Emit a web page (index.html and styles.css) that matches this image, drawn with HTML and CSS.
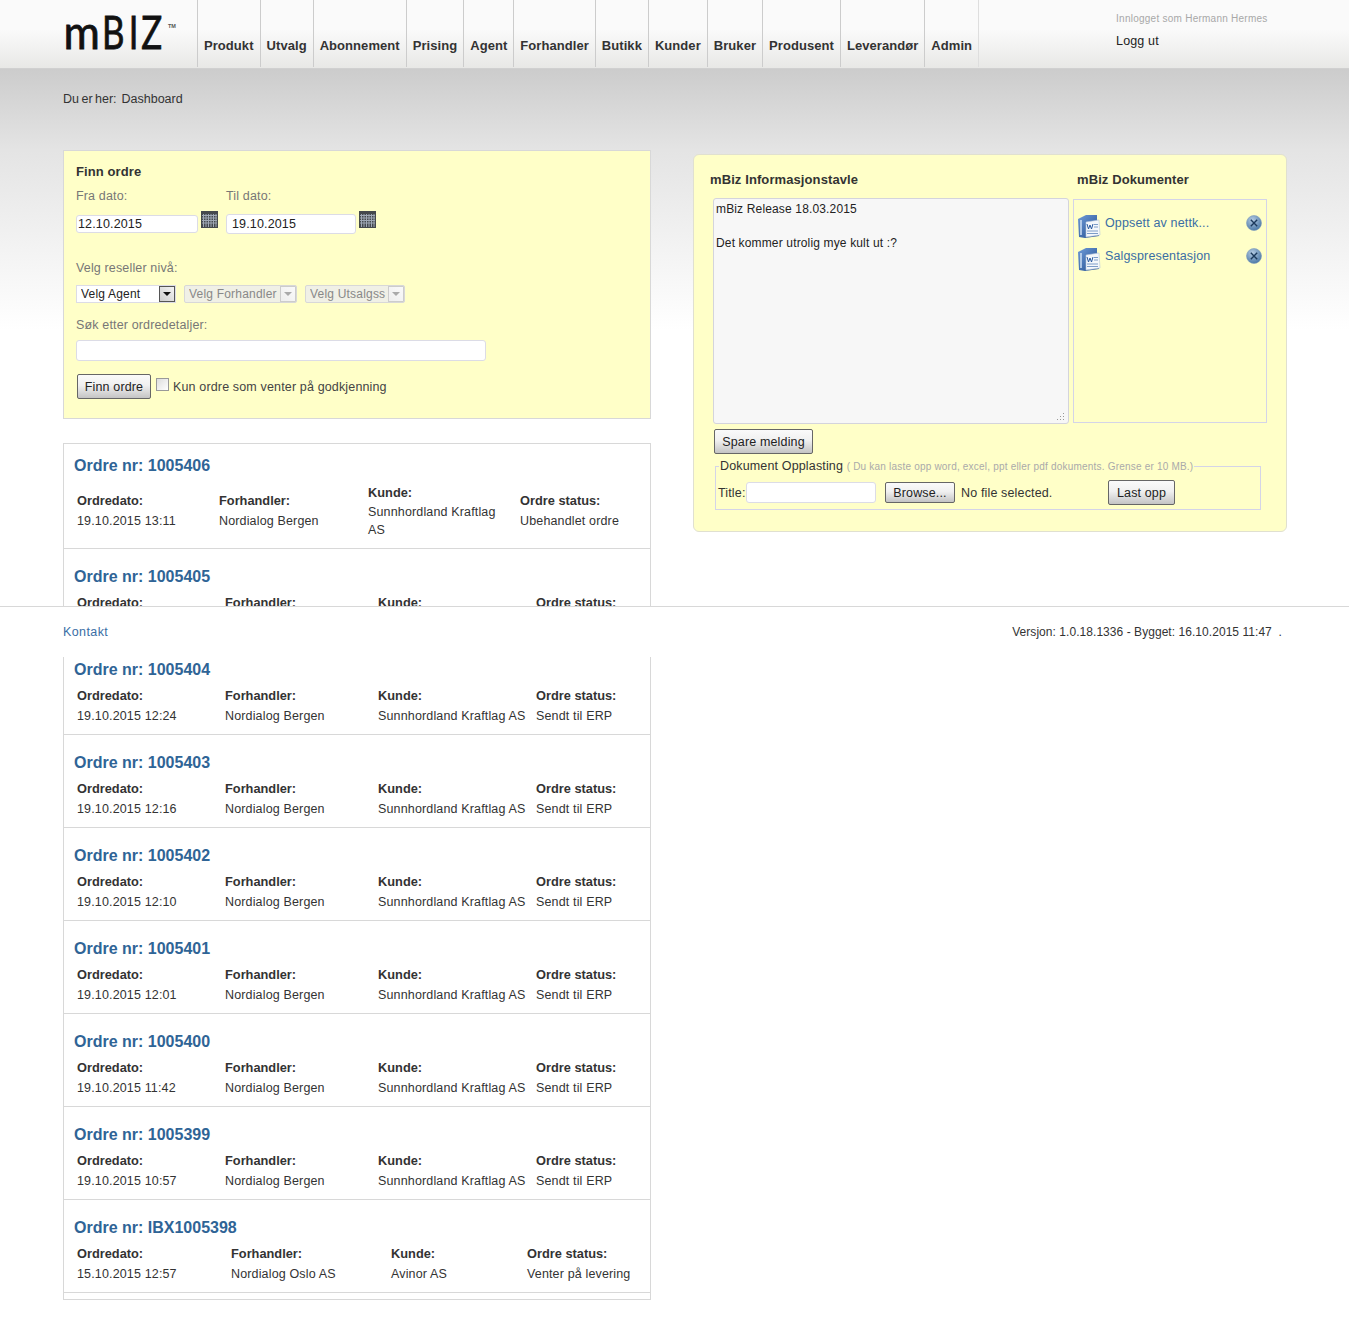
FILE: index.html
```html
<!DOCTYPE html>
<html lang="no">

<head>
    <meta charset="UTF-8">
    <title>mBiz</title>
    <link rel="stylesheet" href="styles.css">
</head>

<body>
    <svg width="0" height="0" class="defs">
        <defs>
            <linearGradient id="wordblue" x1="0" y1="0" x2="1" y2="1">
                <stop offset="0" stop-color="#6f9bd8" />
                <stop offset="1" stop-color="#1f4a8c" />
            </linearGradient>
            <radialGradient id="xblue" cx=".4" cy=".3" r=".8">
                <stop offset="0" stop-color="#b4cbe3" />
                <stop offset="1" stop-color="#3f6f9f" />
            </radialGradient>
            <symbol id="cal" viewBox="0 0 17 17">
                <rect width="17" height="17" fill="#45494d" />
                <path d="M1 4.5h15M1 7h15M1 9.500h15M1 12h15M2.500 3v13M5 3v13M7.500 3v13M10 3v13M12.500 3v13M15 3v13" stroke="#9fa8b5" stroke-width="1" />
            </symbol>
            <symbol id="word" viewBox="0 0 24 25">
                <path d="M1 5 L9 1 H20 V5 L22 22 L8 24 L2 23 Z" fill="url(#wordblue)" />
                <path d="M9 8 L22 6 L23 21 L9 23 Z" fill="#f4f7fb" stroke="#b6c6dc" stroke-width=".6" />
                <path d="M4 6 V21" stroke="#cfe0f5" stroke-width="1.500" />
                <path d="M10 10 L11.500 15 L13 11 L14.500 15 L16 10" fill="none" stroke="#2a5aa0" stroke-width="1" />
                <path d="M17 10.500h4M17 13h4M10 17h11M10 19.500h11" stroke="#7c9cc8" stroke-width="1" />
            </symbol>
            <symbol id="del" viewBox="0 0 16 16">
                <circle cx="8" cy="8" r="7.500" fill="url(#xblue)" stroke="#7f9cbc" stroke-width=".6" />
                <path d="M4.800 4.800l6.400 6.400M11.200 4.800l-6.400 6.400" stroke="#1c3a5c" stroke-width="1.400" />
            </symbol>
        </defs>
    </svg>

    <header class="top">
        <a class="logo" href="#">
            <svg class="logo-svg" width="114" height="40" viewBox="0 0 114 40">
                <text transform="translate(.5 37) scale(.94 1)" class="logo-word">m</text>
                <text transform="translate(2 37) scale(.74 1)" x="50 86 103" y="0" class="logo-word">BIZ</text>
                <text x="105" y="16" class="logo-tm">TM</text>
            </svg>
        </a>
        <nav class="menu">
            <a href="#">Produkt</a>
            <a href="#">Utvalg</a>
            <a href="#">Abonnement</a>
            <a href="#">Prising</a>
            <a href="#">Agent</a>
            <a href="#">Forhandler</a>
            <a href="#">Butikk</a>
            <a href="#">Kunder</a>
            <a href="#">Bruker</a>
            <a href="#">Produsent</a>
            <a href="#">Leverandør</a>
            <a href="#">Admin</a>
        </nav>
        <div class="user">
            <p class="user-name">Innlogget som Hermann Hermes</p>
            <a class="logout" href="#">Logg ut</a>
        </div>
    </header>

    <main class="page">
        <p class="crumb">Du er her: &nbsp;Dashboard</p>
        <div class="columns">
            <section class="left">
                <form class="search">
                    <h2>Finn ordre</h2>
                    <div class="dates">
                        <div class="date-from">
                            <label>Fra dato:</label>
                            <div class="date-row">
                                <input class="from" type="text" value="12.10.2015">
                                <svg class="cal"><use href="#cal" /></svg>
                            </div>
                        </div>
                        <div class="date-to">
                            <label>Til dato:</label>
                            <div class="date-row">
                                <input class="to" type="text" value="19.10.2015">
                                <svg class="cal"><use href="#cal" /></svg>
                            </div>
                        </div>
                    </div>
                    <label class="lvl-label">Velg reseller nivå:</label>
                    <div class="levels">
                        <div class="fake-select sel-agent"><span>Velg Agent</span><i></i></div>
                        <div class="fake-select off sel-dealer"><span>Velg Forhandler</span><i></i></div>
                        <div class="fake-select off sel-shop"><span>Velg Utsalgss</span><i></i></div>
                    </div>
                    <label class="q-label">Søk etter ordredetaljer:</label>
                    <input class="q" type="text">
                    <div class="submit-row">
                        <button type="button" class="btn btn-find">Finn ordre</button>
                        <span class="fake-check"></span>
                        <span class="check-text">Kun ordre som venter på godkjenning</span>
                    </div>
                </form>

                <div class="orders">
                    <article class="order first">
                        <h3>Ordre nr: 1005406</h3>
                        <div class="cols">
                            <dl><dt>Ordredato:</dt><dd>19.10.2015 13:11</dd></dl>
                            <dl><dt>Forhandler:</dt><dd>Nordialog Bergen</dd></dl>
                            <dl><dt>Kunde:</dt><dd>Sunnhordland Kraftlag AS</dd></dl>
                            <dl><dt>Ordre status:</dt><dd>Ubehandlet ordre</dd></dl>
                        </div>
                    </article>
                    <article class="order">
                        <h3>Ordre nr: 1005405</h3>
                        <div class="cols">
                            <dl><dt>Ordredato:</dt><dd>19.10.2015 12:40</dd></dl>
                            <dl><dt>Forhandler:</dt><dd>Nordialog Bergen</dd></dl>
                            <dl><dt>Kunde:</dt><dd>Sunnhordland Kraftlag AS</dd></dl>
                            <dl><dt>Ordre status:</dt><dd>Sendt til ERP</dd></dl>
                        </div>
                    </article>
                    <article class="order">
                        <h3>Ordre nr: 1005404</h3>
                        <div class="cols">
                            <dl><dt>Ordredato:</dt><dd>19.10.2015 12:24</dd></dl>
                            <dl><dt>Forhandler:</dt><dd>Nordialog Bergen</dd></dl>
                            <dl><dt>Kunde:</dt><dd>Sunnhordland Kraftlag AS</dd></dl>
                            <dl><dt>Ordre status:</dt><dd>Sendt til ERP</dd></dl>
                        </div>
                    </article>
                    <article class="order">
                        <h3>Ordre nr: 1005403</h3>
                        <div class="cols">
                            <dl><dt>Ordredato:</dt><dd>19.10.2015 12:16</dd></dl>
                            <dl><dt>Forhandler:</dt><dd>Nordialog Bergen</dd></dl>
                            <dl><dt>Kunde:</dt><dd>Sunnhordland Kraftlag AS</dd></dl>
                            <dl><dt>Ordre status:</dt><dd>Sendt til ERP</dd></dl>
                        </div>
                    </article>
                    <article class="order">
                        <h3>Ordre nr: 1005402</h3>
                        <div class="cols">
                            <dl><dt>Ordredato:</dt><dd>19.10.2015 12:10</dd></dl>
                            <dl><dt>Forhandler:</dt><dd>Nordialog Bergen</dd></dl>
                            <dl><dt>Kunde:</dt><dd>Sunnhordland Kraftlag AS</dd></dl>
                            <dl><dt>Ordre status:</dt><dd>Sendt til ERP</dd></dl>
                        </div>
                    </article>
                    <article class="order">
                        <h3>Ordre nr: 1005401</h3>
                        <div class="cols">
                            <dl><dt>Ordredato:</dt><dd>19.10.2015 12:01</dd></dl>
                            <dl><dt>Forhandler:</dt><dd>Nordialog Bergen</dd></dl>
                            <dl><dt>Kunde:</dt><dd>Sunnhordland Kraftlag AS</dd></dl>
                            <dl><dt>Ordre status:</dt><dd>Sendt til ERP</dd></dl>
                        </div>
                    </article>
                    <article class="order">
                        <h3>Ordre nr: 1005400</h3>
                        <div class="cols">
                            <dl><dt>Ordredato:</dt><dd>19.10.2015 11:42</dd></dl>
                            <dl><dt>Forhandler:</dt><dd>Nordialog Bergen</dd></dl>
                            <dl><dt>Kunde:</dt><dd>Sunnhordland Kraftlag AS</dd></dl>
                            <dl><dt>Ordre status:</dt><dd>Sendt til ERP</dd></dl>
                        </div>
                    </article>
                    <article class="order">
                        <h3>Ordre nr: 1005399</h3>
                        <div class="cols">
                            <dl><dt>Ordredato:</dt><dd>19.10.2015 10:57</dd></dl>
                            <dl><dt>Forhandler:</dt><dd>Nordialog Bergen</dd></dl>
                            <dl><dt>Kunde:</dt><dd>Sunnhordland Kraftlag AS</dd></dl>
                            <dl><dt>Ordre status:</dt><dd>Sendt til ERP</dd></dl>
                        </div>
                    </article>
                    <article class="order last">
                        <h3>Ordre nr: IBX1005398</h3>
                        <div class="cols">
                            <dl><dt>Ordredato:</dt><dd>15.10.2015 12:57</dd></dl>
                            <dl><dt>Forhandler:</dt><dd>Nordialog Oslo AS</dd></dl>
                            <dl><dt>Kunde:</dt><dd>Avinor AS</dd></dl>
                            <dl><dt>Ordre status:</dt><dd>Venter på levering</dd></dl>
                        </div>
                    </article>
                </div>
            </section>

            <section class="board">
                <div class="board-top">
                    <div class="info">
                        <h2>mBiz Informasjonstavle</h2>
                        <div class="note-wrap">
                            <textarea class="note">mBiz Release 18.03.2015

Det kommer utrolig mye kult ut :?</textarea>
                            <svg class="grip" width="9" height="9" viewBox="0 0 9 9">
                                <path d="M7.500 1v1M7.500 4v1M7.500 7v1M4.500 4v1M4.500 7v1M1.500 7v1" stroke="#999" stroke-width="1" />
                            </svg>
                        </div>
                    </div>
                    <div class="docs">
                        <h2>mBiz Dokumenter</h2>
                        <ul class="doc-list">
                            <li>
                                <svg class="doc-icon"><use href="#word" /></svg>
                                <a href="#">Oppsett av nettk...</a>
                                <svg class="doc-del"><use href="#del" /></svg>
                            </li>
                            <li>
                                <svg class="doc-icon"><use href="#word" /></svg>
                                <a href="#">Salgspresentasjon</a>
                                <svg class="doc-del"><use href="#del" /></svg>
                            </li>
                        </ul>
                    </div>
                </div>
                <button type="button" class="btn btn-save">Spare melding</button>
                <fieldset class="upload">
                    <legend>Dokument Opplasting <small>( Du kan laste opp word, excel, ppt eller pdf dokuments. Grense er 10 MB.)</small></legend>
                    <label class="title-label">Title:</label>
                    <input class="title" type="text">
                    <button type="button" class="btn btn-browse">Browse...</button>
                    <span class="no-file">No file selected.</span>
                    <button type="button" class="btn btn-upload">Last opp</button>
                </fieldset>
            </section>
        </div>
    </main>

    <footer class="foot">
        <a href="#">Kontakt</a>
        <span class="version">Versjon: 1.0.18.1336 - Bygget: 16.10.2015 11:47 &nbsp;.</span>
    </footer>
</body>

</html>
```

FILE: styles.css
```css
* {
    padding: 0;
    margin: 0;
    box-sizing: border-box;
}

html {
    background: #fff;
}

body {
    position: relative;
    height: 1336px;
    overflow: hidden;
    font-family: "Liberation Sans", Arial, sans-serif;
    font-size: 12.500px;
    letter-spacing: .15px;
    color: #333;
    background: linear-gradient(#ccc 69px, #e4e4e4 150px, #fff 330px) no-repeat;
}

a {
    text-decoration: none;
}

.defs {
    position: absolute;
}

/* header */
.top {
    height: 69px;
    display: flex;
    border-bottom: 1px solid #d0d0d0;
    background: linear-gradient(#fafafa 0, #fafafa 30px, #e8e8e6 68px);
}

.logo {
    width: 134px;
    margin-left: 63px;
    padding-top: 12px;
}

.logo-svg {
    overflow: visible;
}

.logo-word {
    font-family: Lato, sans-serif;
    font-size: 47px;
    letter-spacing: 0;
    fill: #111;
    stroke: #111;
    stroke-width: .8px;
}

.logo-tm {
    font-size: 5.500px;
    font-weight: bold;
    letter-spacing: 0;
    fill: #555;
}

.menu {
    display: flex;
    height: 67px;
    border-right: 1px solid #dedede;
}

.menu a {
    display: block;
    padding: 38px 6px 0 6px;
    border-left: 1px solid #ccc;
    font-size: 13px;
    font-weight: bold;
    letter-spacing: .06px;
    color: #333;
}

.user {
    margin-left: 137px;
    padding-top: 13px;
}

.user-name {
    font-size: 10px;
    letter-spacing: .25px;
    color: #a8a8a8;
}

.logout {
    display: block;
    margin-top: 10px;
    color: #222;
}

/* page */
.crumb {
    padding: 23px 0 0 63px;
    height: 81px;
    letter-spacing: 0;
    word-spacing: -1px;
}

.columns {
    display: flex;
    align-items: flex-start;
    padding-left: 63px;
    gap: 42px;
}

.left {
    width: 588px;
}

/* search */
.search {
    height: 269px;
    padding: 13px 12px 0;
    background: #ffffc8;
    border: 1px solid #d8d8d8;
    color: #777;
}

.search h2,
.board h2 {
    font-size: 13px;
    line-height: 15px;
    letter-spacing: .1px;
    color: #333;
}

.search label {
    display: block;
    line-height: 14px;
}

.dates {
    display: flex;
    margin-top: 10px;
}

.date-from {
    width: 150px;
}

.date-row {
    display: flex;
    align-items: flex-start;
    margin-top: 10px;
}

input,
textarea {
    font: inherit;
    letter-spacing: inherit;
    border: 1px solid #dcdce6;
    border-radius: 3px;
    background: #fff;
    color: #222;
}

.from {
    width: 122px;
    height: 18px;
    margin-top: 2px;
    padding-left: 1px;
}

.to {
    width: 130px;
    height: 20px;
    margin-top: 1px;
    padding-left: 5px;
}

.cal {
    width: 17px;
    height: 17px;
    margin-left: 3px;
    margin-top: -2px;
}

.lvl-label {
    margin-top: 27px;
}

.levels {
    display: flex;
    margin-top: 10px;
}

.fake-select {
    display: flex;
    align-items: center;
    height: 18px;
    padding-left: 4px;
    font-size: 12px;
    letter-spacing: .2px;
    background: #fff;
    border: 1px solid #dcdce6;
    color: #222;
    overflow: hidden;
}

.fake-select span {
    flex: 1;
    white-space: nowrap;
    overflow: hidden;
}

.fake-select i {
    width: 16px;
    height: 16px;
    flex: none;
    border: 1px solid #555;
    background: linear-gradient(45deg, #ccc, #f4f4f4);
    position: relative;
}

.fake-select i::after {
    content: "";
    position: absolute;
    left: 3px;
    top: 5px;
    border: 4px solid transparent;
    border-top: 4px solid #111;
    border-bottom: 0;
}

.fake-select.off {
    background: #f0f0e6;
    border-color: #d8d8d8;
    color: #888;
    border-radius: 2px;
}

.fake-select.off i {
    border-color: #ccc;
    background: linear-gradient(45deg, #eee, #fafafa);
}

.fake-select.off i::after {
    border-top-color: #aaa;
}

.sel-agent {
    width: 100px;
}

.sel-dealer {
    width: 113px;
    margin-left: 8px;
}

.sel-shop {
    width: 100px;
    margin-left: 8px;
}

.q-label {
    margin-top: 15px;
}

.q {
    display: block;
    width: 410px;
    height: 21px;
    margin-top: 8px;
}

.submit-row {
    display: flex;
    align-items: center;
    margin-top: 13px;
    color: #444;
}

.btn {
    font: inherit;
    letter-spacing: inherit;
    color: #222;
    height: 25px;
    padding: 0 8px;
    border: 1px solid #666;
    border-radius: 2px;
    background: linear-gradient(#fafafa, #f0f0f0 45%, #c4c4c4);
}

.btn-find {
    margin-left: 1px;
    width: 74px;
    padding: 0;
}

.fake-check {
    width: 13px;
    height: 13px;
    margin: -4px 4px 0 5px;
    border: 1px solid #999;
    background: linear-gradient(135deg, #ddd, #fff);
}

/* orders */
.orders {
    margin-top: 24px;
    height: 857px;
    border: 1px solid #d8d8d8;
    background: #fff;
}

.order {
    height: 93px;
    padding: 19px 0 0 10px;
    border-bottom: 1px solid #d8d8d8;
}

.order h3 {
    font-size: 16px;
    line-height: 18px;
    letter-spacing: 0;
    color: #2f6496;
}

.cols {
    display: grid;
    grid-template-columns: 148px 153px 158px auto;
    padding: 7px 0 0 3px;
}

.cols dt {
    font-weight: bold;
    font-size: 12.800px;
    letter-spacing: 0;
    line-height: 20px;
}

.cols dd {
    line-height: 20px;
}

.first {
    height: 105px;
    padding-top: 13px;
}

.first .cols {
    grid-template-columns: 142px 149px 152px auto;
    align-items: center;
    padding-top: 0;
    margin-top: 8px;
}

.first dl:nth-child(3) dd {
    width: 130px;
    line-height: 18px;
}

.last .cols {
    grid-template-columns: 154px 160px 136px auto;
}

/* board */
.board {
    width: 594px;
    height: 378px;
    margin-top: 4px;
    padding: 0 19px 0 16px;
    background: #ffffc8;
    border: 1px solid #e0e0d0;
    border-radius: 6px;
}

.board-top {
    display: flex;
    padding-top: 17px;
}

.info {
    width: 363px;
}

.note-wrap {
    position: relative;
    width: 356px;
    height: 226px;
    margin: 11px 0 0 3px;
}

.note {
    display: block;
    width: 100%;
    height: 100%;
    padding: 2px;
    border: 1px solid #d4d4dc;
    background: #f7f7f7;
    font-size: 12px;
    line-height: 17px;
    resize: none;
    overflow: hidden;
}

.grip {
    position: absolute;
    right: 4px;
    bottom: 3px;
}

.docs {
    width: 194px;
}

.docs h2 {
    padding-left: 4px;
}

.doc-list {
    list-style: none;
    width: 194px;
    height: 224px;
    margin-top: 12px;
    padding-top: 14px;
    border: 1px solid #d4d4e8;
}

.doc-list li {
    display: flex;
    height: 33px;
    padding-left: 3px;
}

.doc-list a {
    width: 145px;
    padding: 2px 0 0 4px;
    color: #3a6ea5;
}

.doc-icon {
    width: 24px;
    height: 25px;
    flex: none;
}

.doc-del {
    width: 16px;
    height: 16px;
    margin-top: 1px;
}

.btn-save {
    display: block;
    margin: 5px 0 0 4px;
    width: 99px;
    padding: 0;
}

.upload {
    display: flex;
    align-items: center;
    width: 546px;
    height: 51px;
    margin: 5px 0 0 5px;
    border: 1px solid #d4d4e8;
    padding: 3px 0 0 2px;
}

.upload legend {
    margin-left: 1px;
    padding: 0 1px;
}

.upload small {
    font-size: 10px;
    letter-spacing: .2px;
    color: #aaa;
}

.title-label {
    width: 28px;
}

.title {
    width: 130px;
    height: 21px;
}

.btn-browse {
    width: 70px;
    height: 21px;
    padding: 0;
    margin-left: 9px;
}

.no-file {
    width: 147px;
    margin-left: 6px;
}

.btn-upload {
    width: 67px;
    padding: 0;
}

/* footer lies over the order list */
.foot {
    position: absolute;
    left: 0;
    right: 0;
    top: 606px;
    height: 51px;
    display: flex;
    justify-content: space-between;
    padding: 18px 67px 0 63px;
    background: #fff;
    border-top: 1px solid #d8d8d8;
}

.foot a {
    letter-spacing: .4px;
    color: #3a6ea5;
}

.version {
    font-size: 12px;
    letter-spacing: .05px;
}
```
